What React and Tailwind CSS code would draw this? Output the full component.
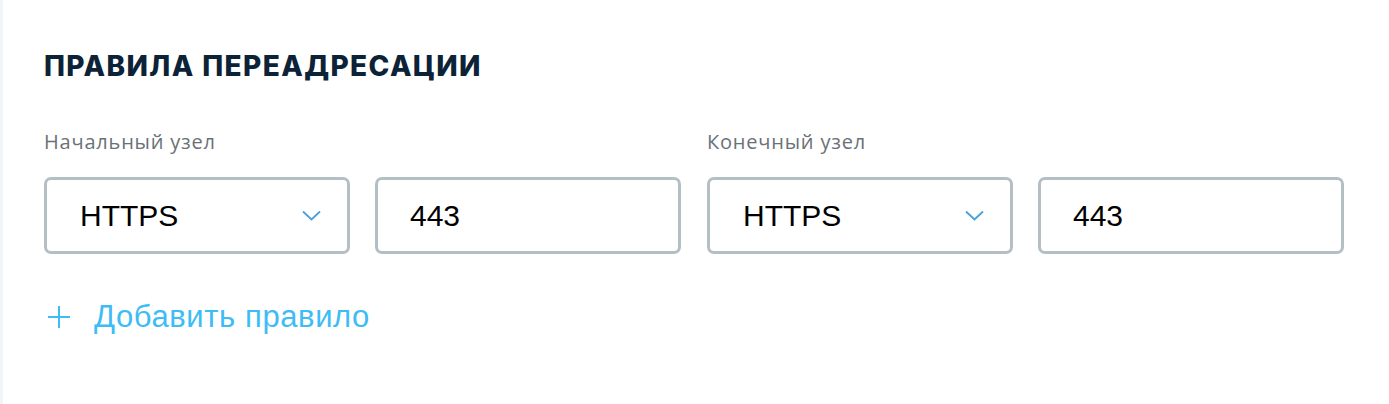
import { useState } from "react";

const sans = { fontFamily: "'Liberation Sans', Arial, sans-serif" };

function Chevron() {
  return (
    <svg width="19" height="11" viewBox="0 0 19 11" fill="none">
      <path d="M1 1.5 L9.5 9.5 L18 1.5" stroke="#4aa0d8" strokeWidth="1.8" />
    </svg>
  );
}

function NodeGroup({ label, protocol, port }) {
  return (
    <div className="flex flex-col">
      <p className="text-[20px] leading-[24px] tracking-[0.8px] text-[#6b7176] font-['Open_Sans',sans-serif]">
        {label}
      </p>
      <div className="mt-[23px] flex gap-[25px]">
        <button
          type="button"
          className="flex h-[77px] w-[306px] items-center justify-between rounded-[7px] border-[3px] border-[#b4bfc5] bg-white pl-[33px] pr-[26px] text-[30px] text-black"
          style={sans}
        >
          <span>{protocol}</span>
          <Chevron />
        </button>
        <input
          defaultValue={port}
          className="h-[77px] w-[306px] rounded-[7px] border-[3px] border-[#b4bfc5] bg-white pl-[32px] text-[30px] text-black outline-none"
          style={sans}
        />
      </div>
    </div>
  );
}

export default function App() {
  const [rules] = useState([
    { id: 1, from: "HTTPS", fromPort: "443", to: "HTTPS", toPort: "443" },
  ]);

  return (
    <div className="flex h-[404px] w-full bg-white">
      <div className="w-[3px] bg-[#f2f5f8]" />
      <div className="flex-1 pl-[41px] pt-[49px]">
        <h2 className="text-[28px] font-extrabold uppercase leading-[34px] tracking-[1.4px] text-[#0c2237] font-['Inter',sans-serif]">
          Правила переадресации
        </h2>
        {rules.map((rule) => (
          <div key={rule.id} className="mt-[47px] flex gap-[26px]">
            <NodeGroup label="Начальный узел" protocol={rule.from} port={rule.fromPort} />
            <NodeGroup label="Конечный узел" protocol={rule.to} port={rule.toPort} />
          </div>
        ))}
        <button
          type="button"
          className="mt-[45px] flex items-center gap-[24px] pl-[4px] text-[31px] leading-[36px] tracking-[0.6px] text-[#3ebcf5]"
          style={sans}
        >
          <svg width="22" height="22" viewBox="0 0 22 22">
            <path d="M11 0 V22 M0 11 H22" stroke="#3ebcf5" strokeWidth="2" />
          </svg>
          <span>Добавить правило</span>
        </button>
      </div>
    </div>
  );
}
